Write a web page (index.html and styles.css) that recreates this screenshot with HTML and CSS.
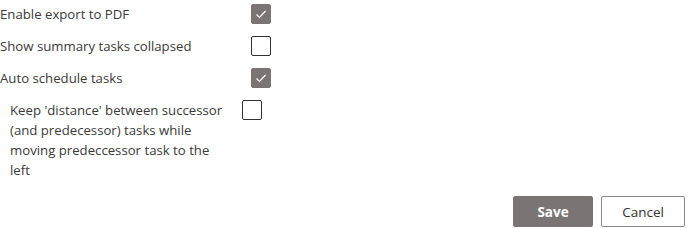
FILE: index.html
```html
<!DOCTYPE html>
<html>
<head>
<meta charset="utf-8">
<link rel="stylesheet" href="styles.css">
</head>
<body>
<div class="settings">
  <div class="row">
    <span class="label">Enable export to PDF</span>
    <span class="box checked"><svg viewBox="0 0 20 20" width="20" height="20"><polyline points="5.5,10.5 8.5,13.5 14.5,7" fill="none" stroke="#fff" stroke-width="1.2"/></svg></span>
  </div>
  <div class="row">
    <span class="label">Show summary tasks collapsed</span>
    <span class="box"></span>
  </div>
  <div class="row">
    <span class="label">Auto schedule tasks</span>
    <span class="box checked"><svg viewBox="0 0 20 20" width="20" height="20"><polyline points="5.5,10.5 8.5,13.5 14.5,7" fill="none" stroke="#fff" stroke-width="1.2"/></svg></span>
  </div>
  <div class="row row-wrap">
    <span class="label label-wrap">Keep 'distance' between successor<br>(and predecessor) tasks while<br>moving predeccessor task to the<br>left</span>
    <span class="box"></span>
  </div>
</div>
<div class="actions">
  <button class="btn btn-primary">Save</button>
  <button class="btn btn-default">Cancel</button>
</div>
</body>
</html>
```
FILE: styles.css
```css
html, body {
  margin: 0;
  padding: 0;
  background: #fff;
}
body {
  width: 691px;
  height: 228px;
  overflow: hidden;
  font-family: "Open Sans", "Noto Sans", sans-serif;
  font-size: 13.2px;
  color: #3b3a39;
}
.settings {
  display: flex;
  flex-direction: column;
  gap: 12px;
  padding-top: 4px;
}
.row {
  display: flex;
  align-items: flex-start;
  line-height: 20px;
}
.label {
  width: 251px;
  flex: none;
}
.row-wrap {
  padding-left: 10px;
}
.label-wrap {
  width: 232px;
  white-space: nowrap;
}
.box {
  width: 20px;
  height: 20px;
  box-sizing: border-box;
  border: 1px solid #323130;
  border-radius: 2px;
  flex: none;
  display: flex;
}
.box.checked {
  background: #7a7574;
  border-color: #7a7574;
}
.box svg {
  margin: -1px;
}
.actions {
  display: flex;
  justify-content: flex-end;
  gap: 8px;
  padding-right: 6px;
  margin-top: 16px;
}
.btn {
  height: 31px;
  box-sizing: border-box;
  font-family: "Open Sans", "Noto Sans", sans-serif;
  font-size: 13.5px;
  border-radius: 2px;
  padding: 0;
}
.btn-primary {
  width: 80px;
  background: #7a7574;
  border: 1px solid #7a7574;
  color: #fff;
  font-weight: 700;
}
.btn-default {
  width: 84px;
  background: #fff;
  border: 1px solid #8a8886;
  color: #323130;
}
```
